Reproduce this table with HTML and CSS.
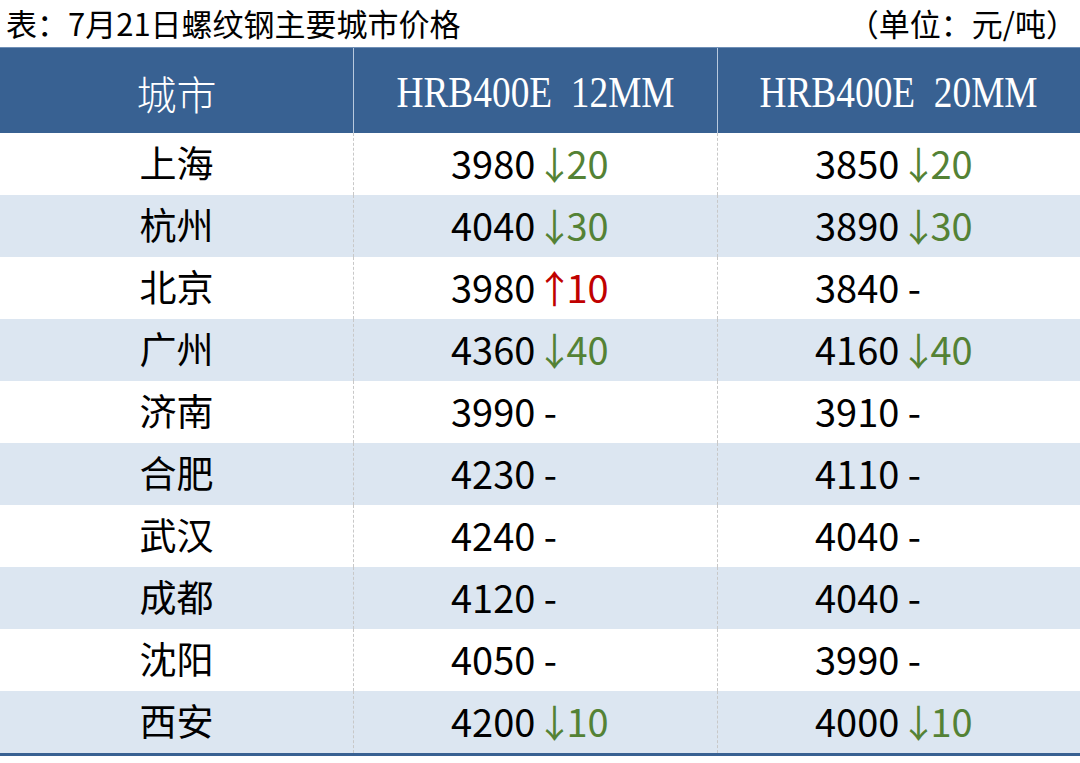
FILE: index.html
```html
<!DOCTYPE html>
<html lang="zh">
<head>
<meta charset="utf-8">
<link rel="stylesheet" href="styles.css">
</head>
<body>
<div class="page">
  <div class="caption">
    <span class="title">表：7月21日螺纹钢主要城市价格</span>
    <span class="unit">（单位：元/吨）</span>
  </div>
  <div class="table">
    <div class="hrow">
      <div class="hcell city-h">城市</div>
      <div class="hcell"><span class="spec">HRB400E  12MM</span></div>
      <div class="hcell"><span class="spec">HRB400E  20MM</span></div>
    </div>
    <div class="row">
      <div class="cell city">上海</div>
      <div class="cell num">3980<span class="dn"><span class="ar">↓</span>20</span></div>
      <div class="cell num">3850<span class="dn"><span class="ar">↓</span>20</span></div>
    </div>
    <div class="row alt">
      <div class="cell city">杭州</div>
      <div class="cell num">4040<span class="dn"><span class="ar">↓</span>30</span></div>
      <div class="cell num">3890<span class="dn"><span class="ar">↓</span>30</span></div>
    </div>
    <div class="row">
      <div class="cell city">北京</div>
      <div class="cell num">3980<span class="up"><span class="ar">↑</span>10</span></div>
      <div class="cell num">3840 -</div>
    </div>
    <div class="row alt">
      <div class="cell city">广州</div>
      <div class="cell num">4360<span class="dn"><span class="ar">↓</span>40</span></div>
      <div class="cell num">4160<span class="dn"><span class="ar">↓</span>40</span></div>
    </div>
    <div class="row">
      <div class="cell city">济南</div>
      <div class="cell num">3990 -</div>
      <div class="cell num">3910 -</div>
    </div>
    <div class="row alt">
      <div class="cell city">合肥</div>
      <div class="cell num">4230 -</div>
      <div class="cell num">4110 -</div>
    </div>
    <div class="row">
      <div class="cell city">武汉</div>
      <div class="cell num">4240 -</div>
      <div class="cell num">4040 -</div>
    </div>
    <div class="row alt">
      <div class="cell city">成都</div>
      <div class="cell num">4120 -</div>
      <div class="cell num">4040 -</div>
    </div>
    <div class="row">
      <div class="cell city">沈阳</div>
      <div class="cell num">4050 -</div>
      <div class="cell num">3990 -</div>
    </div>
    <div class="row alt last">
      <div class="cell city">西安</div>
      <div class="cell num">4200<span class="dn"><span class="ar">↓</span>10</span></div>
      <div class="cell num">4000<span class="dn"><span class="ar">↓</span>10</span></div>
    </div>
  </div>
</div>
</body>
</html>
```

FILE: styles.css
```css
* { box-sizing: border-box; }
html, body { margin: 0; padding: 0; background: #ffffff; }
body {
  width: 1080px;
  height: 763px;
  overflow: hidden;
  font-family: "Noto Sans CJK SC", "Noto Sans", sans-serif;
  color: #000;
}
.page { width: 1080px; }
.caption {
  height: 47px;
  display: flex;
  justify-content: space-between;
  align-items: center;
  padding: 0 3px 2px 6px;
  font-size: 31px;
  font-weight: 400;
  line-height: 1;
}
.table {
  width: 1080px;
  border-bottom: 3px solid #386192;
}
.hrow, .row {
  display: grid;
  grid-template-columns: 353px 364px 363px;
}
.hrow {
  height: 86px;
  background: #386192;
  border-top: 1px solid #6f8fb6;
}
.hcell {
  display: flex;
  align-items: center;
  justify-content: center;
  color: #ffffff;
  border-left: 1px solid #b8c9de;
}
.hcell:first-child { border-left: none; }
.city-h {
  font-size: 40px;
  font-weight: 300;
  padding-top: 4px;
}
.spec {
  display: inline-block;
  font-family: "Liberation Serif", "Times New Roman", serif;
  font-size: 45px;
  white-space: pre;
  transform: scaleX(0.83);
  padding-top: 2px;
}
.row {
  height: 62px;
  background: #ffffff;
}
.row.alt { background: #dce6f1; }
.cell {
  display: flex;
  align-items: center;
  font-size: 37px;
  line-height: 1;
  border-left: 1px dashed #c8c8c8;
  white-space: pre;
  padding-bottom: 3px;
}
.cell:first-child { border-left: none; }
.city { justify-content: center; }
.num {
  padding-left: 97px;
  font-size: 38px;
}
.dn { color: #548235; }
.up { color: #c00000; }
.ar { letter-spacing: -7px; }
```
